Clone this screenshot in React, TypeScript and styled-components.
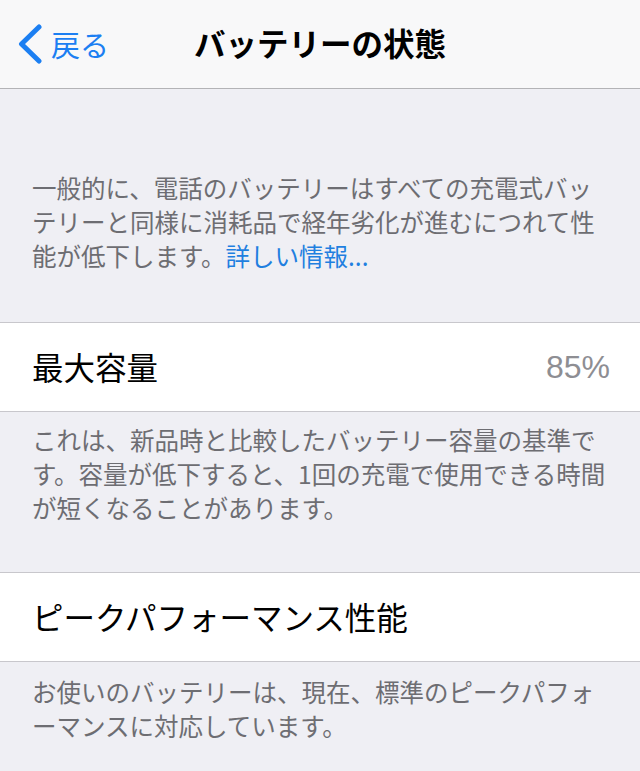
import React from "react";
import styled, { createGlobalStyle } from "styled-components";

const Global = createGlobalStyle`
  html, body { margin: 0; padding: 0; background: #efeff4; }
  body { font-family: "Noto Sans CJK JP", "Noto Sans", sans-serif; -webkit-font-smoothing: antialiased; }
`;

const Page = styled.div`
  width: 640px;
  min-height: 771px;
  background: #efeff4;
  display: flex;
  flex-direction: column;
`;

const NavBar = styled.header`
  height: 88px;
  background: #f8f8f9;
  border-bottom: 1px solid #b3b3b6;
  display: grid;
  grid-template-columns: 1fr auto 1fr;
  align-items: center;
`;

const BackButton = styled.div`
  display: flex;
  align-items: center;
  gap: 9px;
  padding-left: 18px;
  color: #1c7ff2;
  font-size: 29px;
  line-height: 1;
  svg { display: block; }
`;

const Title = styled.h1`
  margin: 0 0 3px;
  font-size: 31.5px;
  font-weight: 700;
  color: #000;
  line-height: 1;
`;

const Footnote = styled.p<{ $top: number; $bottom: number }>`
  margin: 0;
  padding: ${(p) => p.$top}px 28px ${(p) => p.$bottom}px 32px;
  font-size: 24.5px;
  line-height: 34px;
  color: #6d6d72;
`;

const Link = styled.span`
  color: #1f7fe0;
`;

const Cell = styled.div`
  height: 88px;
  background: #fff;
  border-top: 1px solid #c8c7cc;
  border-bottom: 1px solid #c8c7cc;
  display: flex;
  align-items: center;
  justify-content: space-between;
  padding: 0 30px 0 32px;
`;

const Label = styled.span`
  font-size: 31.5px;
  color: #000;
  line-height: 1;
`;

const Value = styled.span`
  font-family: "Liberation Sans", Arial, sans-serif;
  font-size: 32px;
  color: #8e8e93;
  line-height: 1;
`;

export default function App() {
  return (
    <Page>
      <Global />
      <NavBar>
        <BackButton>
          <svg width="24" height="40" viewBox="0 0 24 40">
            <path d="M21 3 L3.5 20 L21 37" fill="none" stroke="#1c7ff2" strokeWidth="5" strokeLinecap="round" strokeLinejoin="round" />
          </svg>
          <span>戻る</span>
        </BackButton>
        <Title>バッテリーの状態</Title>
        <div />
      </NavBar>
      <Footnote $top={82} $bottom={49}>
        一般的に、電話のバッテリーはすべての充電式バッテリーと同様に消耗品で経年劣化が進むにつれて性能が低下します。<Link>詳しい情報...</Link>
      </Footnote>
      <Cell>
        <Label>最大容量</Label>
        <Value>85%</Value>
      </Cell>
      <Footnote $top={11} $bottom={47}>
        これは、新品時と比較したバッテリー容量の基準です。容量が低下すると、1回の充電で使用できる時間が短くなることがあります。
      </Footnote>
      <Cell>
        <Label>ピークパフォーマンス性能</Label>
      </Cell>
      <Footnote $top={13} $bottom={40}>
        お使いのバッテリーは、現在、標準のピークパフォーマンスに対応しています。
      </Footnote>
    </Page>
  );
}
